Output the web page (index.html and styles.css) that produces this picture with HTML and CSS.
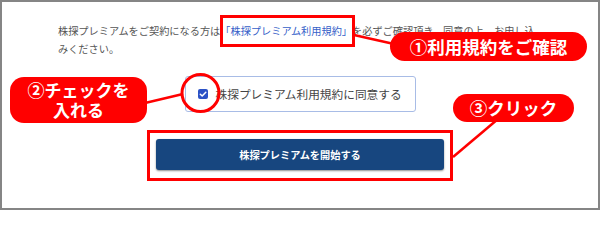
FILE: index.html
```html
<!DOCTYPE html>
<html lang="ja">
<head>
<meta charset="utf-8">
<link rel="stylesheet" href="styles.css">
</head>
<body>
<div class="stage">
  <div class="frame">
    <p class="lead">株探プレミアムをご契約になる方は<a class="terms" href="#">「株探プレミアム利用規約」</a>を必ずご確認頂き、同意の上、お申し込みください。</p>
    <label class="agree">
      <span class="check"><svg viewBox="0 0 10 10" width="10" height="10"><path d="M2.3 5.2 L4.2 7 L7.8 3.2" fill="none" stroke="#fff" stroke-width="1.5" stroke-linecap="round" stroke-linejoin="round"/></svg></span>
      <span class="agree-text">株探プレミアム利用規約に同意する</span>
    </label>
    <button class="start" type="button">株探プレミアムを開始する</button>
  </div>

  <svg class="marks" viewBox="0 0 600 210" width="600" height="210">
    <rect x="221.5" y="16.5" width="132" height="29" fill="none" stroke="#ff0000" stroke-width="3"/>
    <line x1="354" y1="35" x2="394" y2="44" stroke="#ff0000" stroke-width="2.5"/>
    <circle cx="200.5" cy="93" r="18.5" fill="none" stroke="#ff0000" stroke-width="3"/>
    <line x1="145" y1="103" x2="183" y2="94" stroke="#ff0000" stroke-width="2.5"/>
    <rect x="148.5" y="131.5" width="303" height="48" fill="none" stroke="#ff0000" stroke-width="3"/>
    <line x1="498" y1="119" x2="453" y2="157" stroke="#ff0000" stroke-width="2.5"/>
  </svg>

  <div class="note note1">①利用規約をご確認</div>
  <div class="note note2">②チェックを<br>入れる</div>
  <div class="note note3">③クリック</div>
</div>
</body>
</html>
```

FILE: styles.css
```css
html, body {
  margin: 0;
  padding: 0;
  background: #ffffff;
}

.stage {
  position: relative;
  width: 600px;
  height: 210px;
  font-family: "Noto Sans CJK JP", "Noto Sans", sans-serif;
}

.frame {
  box-sizing: border-box;
  width: 600px;
  height: 210px;
  border: 2px solid #858585;
  padding: 20px 0 0 0;
  display: flex;
  flex-direction: column;
}

.lead {
  margin: 0 0 0 56px;
  width: 485px;
  font-size: 10.2px;
  line-height: 18px;
  color: #555555;
}

.terms {
  color: #3560c8;
  text-decoration: none;
}

.agree {
  box-sizing: border-box;
  align-self: center;
  margin-top: 18px;
  width: 231px;
  height: 36px;
  border: 1px solid #a8bce6;
  border-radius: 3px;
  display: flex;
  align-items: center;
  padding: 0 12px;
  gap: 8px;
}

.check {
  width: 10px;
  height: 10px;
  border-radius: 2px;
  background: #2b52c6;
  display: flex;
  flex-shrink: 0;
}

.agree-text {
  font-size: 11.7px;
  color: #444444;
  white-space: nowrap;
  line-height: 1;
}

.start {
  align-self: center;
  margin-top: 27px;
  width: 288px;
  height: 31px;
  border: none;
  border-radius: 3px;
  background: #17467f;
  box-shadow: 0 1px 2px rgba(0, 0, 0, 0.45);
  color: #ffffff;
  font-family: "Noto Sans CJK JP", "Noto Sans", sans-serif;
  font-weight: 700;
  font-size: 10.2px;
  padding: 0;
}

.marks {
  position: absolute;
  left: 0;
  top: 0;
}

.note {
  position: absolute;
  background: #ff0000;
  color: #ffffff;
  font-weight: 700;
  display: flex;
  align-items: center;
  justify-content: center;
  text-align: center;
  white-space: nowrap;
}

.note1 {
  left: 390px;
  top: 32px;
  width: 197px;
  height: 29px;
  border-radius: 15px;
  font-size: 17.5px;
  line-height: 1;
}

.note2 {
  left: 10px;
  top: 77px;
  width: 137px;
  height: 46px;
  border-radius: 14px;
  font-size: 17px;
  line-height: 20px;
}

.note3 {
  left: 453px;
  top: 94px;
  width: 121px;
  height: 28px;
  border-radius: 14px;
  font-size: 17.5px;
  line-height: 1;
}
```
